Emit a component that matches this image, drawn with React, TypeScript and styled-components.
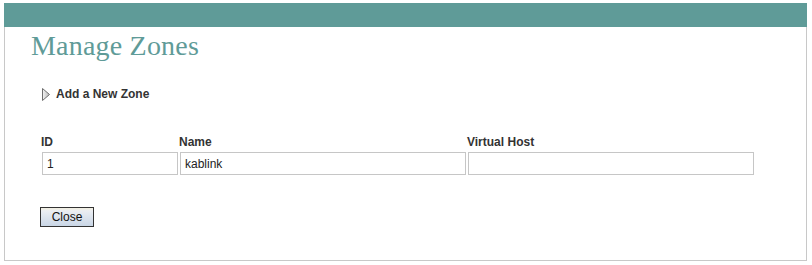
import React from 'react'
import styled, { createGlobalStyle } from 'styled-components'

const GlobalStyle = createGlobalStyle`
    html, body {
        margin: 0;
        padding: 0;
        background: #fff;
    }
    body {
        font-family: "Liberation Sans", Arial, sans-serif;
        font-size: 12px;
        color: #333;
    }
`

interface Field {
    label: string
    value: string
    width: number
}

const fields: Field[] = [
    { label: 'ID', value: '1', width: 136 },
    { label: 'Name', value: 'kablink', width: 286 },
    { label: 'Virtual Host', value: '', width: 286 },
]

export default function App(): JSX.Element {
    return (
        <>
            <GlobalStyle />
            <Panel>
                <TopBar />
                <Body>
                    <Title>Manage Zones</Title>
                    <Toggle>
                        <svg width="8" height="13" viewBox="0 0 8 13">
                            <defs>
                                <linearGradient id="tri" x1="0" y1="0" x2="1" y2="0">
                                    <stop offset="0" stopColor="#f4f4f4" />
                                    <stop offset="1" stopColor="#b8b8b8" />
                                </linearGradient>
                            </defs>
                            <path d="M0.5 0.5 L7.5 6.5 L0.5 12.5 Z" fill="url(#tri)" stroke="#6e6e6e" strokeWidth="1" />
                        </svg>
                        <span>Add a New Zone</span>
                    </Toggle>
                    <FieldGrid $cols={fields.map((f) => f.width + 'px').join(' ')}>
                        {fields.map((f) => (
                            <Label key={'l' + f.label}>{f.label}</Label>
                        ))}
                        {fields.map((f) => (
                            <Input key={'i' + f.label} defaultValue={f.value} />
                        ))}
                    </FieldGrid>
                    <Button>Close</Button>
                </Body>
            </Panel>
        </>
    )
}

const Panel = styled.div`
    margin: 3px 0 0 4px;
    width: 803px;
    height: 258px;
    box-sizing: border-box;
    border: 1px solid #c8c8c8;
    border-top: none;
    display: flex;
    flex-direction: column;
`

const TopBar = styled.div`
    height: 24px;
    margin: 0 -1px;
    background-color: #5f9b98;
`

const Body = styled.div`
    padding: 0 0 0 26px;
    display: flex;
    flex-direction: column;
    align-items: flex-start;
`

const Title = styled.h1`
    margin: 3px 0 0 0;
    font-family: "Liberation Serif", "Times New Roman", serif;
    font-weight: normal;
    font-size: 28px;
    line-height: 32px;
    color: #5f9b98;
    letter-spacing: 0.2px;
`

const Toggle = styled.div`
    margin: 25px 0 0 11px;
    display: flex;
    align-items: center;
    gap: 6px;
    font-weight: bold;
    font-size: 12px;
    color: #333;
    height: 14px;

    svg {
        display: block;
    }
`

const FieldGrid = styled.div<{ $cols: string }>`
    margin: 34px 0 0 11px;
    display: grid;
    grid-template-columns: ${(p) => p.$cols};
    column-gap: 2px;
    row-gap: 3px;
`

const Label = styled.div`
    font-weight: bold;
    font-size: 12px;
    line-height: 14px;
    color: #333;
    margin-left: -1px;
`

const Input = styled.input`
    box-sizing: border-box;
    height: 23px;
    width: 100%;
    margin: 0;
    padding: 0 4px;
    border: 1px solid #c6c6c6;
    font-family: "Liberation Sans", Arial, sans-serif;
    font-size: 12px;
    color: #222;
    background: #fff;
    outline: none;
`

const Button = styled.button`
    margin: 32px 0 0 9px;
    box-sizing: border-box;
    width: 54px;
    height: 20px;
    padding: 0;
    border: 1px solid #333;
    background: linear-gradient(#f2efe0 0, #ebeef3 3px, #c9d6e6 100%);
    font-family: "Liberation Sans", Arial, sans-serif;
    font-size: 12px;
    color: #111;
`
